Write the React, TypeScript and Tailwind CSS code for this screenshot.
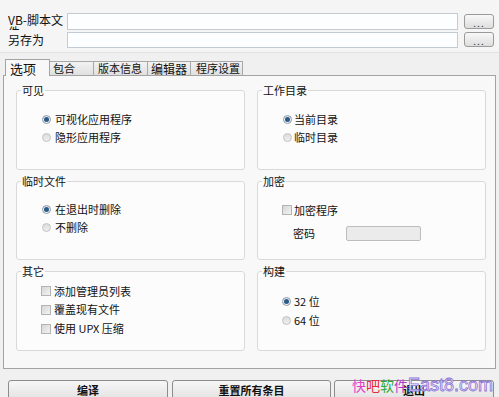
import React from "react";

const Radio = ({ on }: { on?: boolean }) => (
  <span
    className={
      "w-[9px] h-[9px] rounded-full border flex items-center justify-center shrink-0 " +
      (on
        ? "border-[#8d9aa6] bg-linear-to-b from-[#dfe6ec] to-[#f7f9fb]"
        : "border-[#c2c2c2] bg-linear-to-b from-[#dcdcdc] to-[#efefef]")
    }
  >
    {on && <span className="w-[5px] h-[5px] rounded-full bg-[#2b5a86]" />}
  </span>
);

const Check = () => (
  <span className="w-[10px] h-[10px] border border-[#b4b4b4] bg-linear-to-br from-[#d6d6d6] to-[#f3f3f3] shrink-0" />
);

const Box = ({
  title,
  children,
}: {
  title: string;
  children: React.ReactNode;
}) => (
  <fieldset className="border border-[#d9d9d9] rounded-[3px] bg-[#fcfcfc] min-w-0">
    <legend className="ml-[4px] px-[1px] leading-[12px] text-[11px] text-[#111]">
      {title}
    </legend>
    {children}
  </fieldset>
);

export default function App() {
  return (
    <div className="relative w-[499px] h-[397px] overflow-hidden bg-[#f0f0f0] text-[#111] text-[11px] font-['Noto_Sans_CJK_SC','Noto_Sans',sans-serif]">
      {/* top */}
      <div className="h-[53px] bg-[#f5f5f5] border-b border-[#e2e2e2] pt-[13px] pl-[8px]">
        <div className="flex h-[17px]">
          <div className="w-[59px] h-[17px] overflow-hidden pt-[1px] leading-[12px] text-[12px]">
            VB-脚本文件
          </div>
          <div className="w-[391px] h-[17px] border border-[#c3ccd4] bg-[#fdfeff]" />
          <div className="ml-[6px] mt-[1px] w-[30px] h-[15px] rounded-[3px] border border-[#9a9a9a] bg-linear-to-b from-[#f8f8f8] to-[#dedede] flex items-end justify-center leading-[10px] text-[10px] tracking-[1px] text-[#333]">
            ...
          </div>
        </div>
        <div className="flex h-[16px] mt-[2px]">
          <div className="w-[59px] h-[16px] leading-[14px] text-[12px] pt-[1px]">
            另存为
          </div>
          <div className="w-[391px] h-[16px] border border-[#c3ccd4] bg-[#fdfeff]" />
          <div className="ml-[6px] w-[30px] h-[15px] rounded-[3px] border border-[#9a9a9a] bg-linear-to-b from-[#f8f8f8] to-[#dedede] flex items-end justify-center leading-[10px] text-[10px] tracking-[1px] text-[#333]">
            ...
          </div>
        </div>
      </div>

      {/* tabs */}
      <div className="h-[22px] flex items-end pl-[5px]">
        <div className="relative z-10 -mb-px w-[45px] h-[17px] border border-b-0 border-[#a3a3a3] bg-[#f8f8f8] pl-[4px] pt-[2px] leading-[13px] text-[13px]">
          选项
        </div>
        <div className="w-[44px] h-[14px] border border-l-0 border-b-0 border-[#a8a8a8] bg-linear-to-b from-[#f2f2f2] to-[#e0e0e0] pl-[3px] leading-[13px] text-[11px]">
          包合
        </div>
        <div className="w-[54px] h-[14px] border border-l-0 border-b-0 border-[#a8a8a8] bg-linear-to-b from-[#f2f2f2] to-[#e0e0e0] pl-[4px] leading-[13px] text-[11px]">
          版本信息
        </div>
        <div className="w-[43px] h-[14px] border border-l-0 border-b-0 border-[#a8a8a8] bg-linear-to-b from-[#f2f2f2] to-[#e0e0e0] pl-[3px] leading-[13px] text-[12px]">
          编辑器
        </div>
        <div className="w-[52px] h-[14px] border border-l-0 border-b-0 border-[#a8a8a8] bg-linear-to-b from-[#f2f2f2] to-[#e0e0e0] pl-[5px] leading-[13px] text-[11px]">
          程序设置
        </div>
      </div>

      {/* panel */}
      <div className="mx-[3px] h-[294px] border border-[#a3a3a3] bg-[#f8f8f8] pl-[12px] pt-[8px]">
        <div className="grid grid-cols-[229px_229px] grid-rows-[86px_85px_86px] gap-x-[12px] gap-y-[5px]">
          <Box title="可见">
            <div className="pt-[14px] pl-[25px]">
              <div className="h-[18px] flex items-center gap-[4px]">
                <Radio on />
                <span>可视化应用程序</span>
              </div>
              <div className="h-[18px] flex items-center gap-[4px]">
                <Radio />
                <span>隐形应用程序</span>
              </div>
            </div>
          </Box>
          <Box title="工作目录">
            <div className="pt-[14px] pl-[25px]">
              <div className="h-[18px] flex items-center gap-[2px]">
                <Radio on />
                <span>当前目录</span>
              </div>
              <div className="h-[18px] flex items-center gap-[2px]">
                <Radio />
                <span>临时目录</span>
              </div>
            </div>
          </Box>
          <Box title="临时文件">
            <div className="pt-[13px] pl-[25px]">
              <div className="h-[18px] flex items-center gap-[4px]">
                <Radio on />
                <span>在退出时删除</span>
              </div>
              <div className="h-[18px] flex items-center gap-[4px]">
                <Radio />
                <span>不删除</span>
              </div>
            </div>
          </Box>
          <Box title="加密">
            <div className="pt-[14px] pl-[24px]">
              <div className="h-[18px] flex items-center gap-[2px]">
                <Check />
                <span>加密程序</span>
              </div>
              <div className="mt-[5px] h-[18px] flex items-center pl-[11px]">
                <span className="w-[22px]">密码</span>
                <span className="ml-[31px] w-[75px] h-[15px] border border-[#bdbdbd] rounded-[2px] bg-[#ebebeb]" />
              </div>
            </div>
          </Box>
          <Box title="其它">
            <div className="pt-[5px] pl-[24px]">
              <div className="h-[18px] flex items-center gap-[3px]">
                <Check />
                <span>添加管理员列表</span>
              </div>
              <div className="h-[19px] flex items-center gap-[3px]">
                <Check />
                <span>覆盖现有文件</span>
              </div>
              <div className="h-[19px] flex items-center gap-[3px]">
                <Check />
                <span>使用 UPX 压缩</span>
              </div>
            </div>
          </Box>
          <Box title="构建">
            <div className="pt-[15px] pl-[24px]">
              <div className="h-[19px] flex items-center gap-[3px]">
                <Radio on />
                <span>32 位</span>
              </div>
              <div className="h-[19px] flex items-center gap-[3px]">
                <Radio />
                <span>64 位</span>
              </div>
            </div>
          </Box>
        </div>
      </div>

      {/* buttons */}
      <div className="flex mt-[11px] pl-[8px]">
        <div className="w-[160px] h-[26px] rounded-[3px] border border-[#8c8c8c] bg-linear-to-b from-[#f7f7f7] to-[#dcdcdc] text-center pt-[3px] leading-[12px] font-bold">
          编译
        </div>
        <div className="ml-[4px] w-[159px] h-[26px] rounded-[3px] border border-[#8c8c8c] bg-linear-to-b from-[#f7f7f7] to-[#dcdcdc] text-center pt-[3px] leading-[12px] font-bold">
          重置所有条目
        </div>
        <div className="ml-[3px] w-[160px] h-[26px] rounded-[3px] border border-[#8c8c8c] bg-linear-to-b from-[#f7f7f7] to-[#dcdcdc] text-center pt-[3px] leading-[12px] font-bold">
          退出
        </div>
      </div>

      {/* watermark */}
      <div className="absolute left-[352px] top-[375px] flex items-end leading-[20px] text-[14px] whitespace-nowrap">
        <span className="text-[#e23cc8]">快</span>
        <span className="text-[#e8283c]">吧</span>
        <span className="text-[#2ea836]">软</span>
        <span className="text-[#b43cc8]">件</span>
        <span className="text-[18px] text-[#f4f0ff] [-webkit-text-stroke:0.8px_#8a74d6] font-['Liberation_Sans',sans-serif]">
          East8.com
        </span>
      </div>
    </div>
  );
}
